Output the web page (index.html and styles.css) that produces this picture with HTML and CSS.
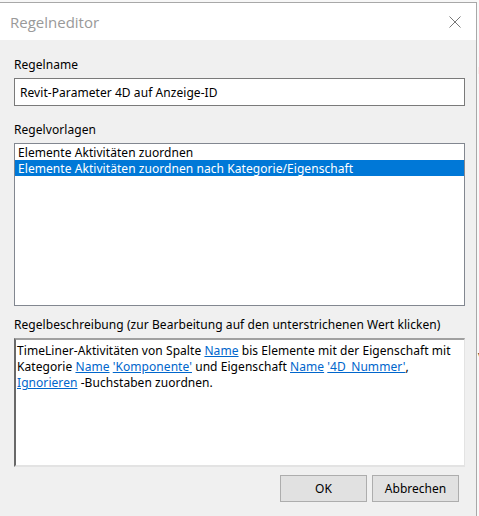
FILE: index.html
```html
<!DOCTYPE html>
<html lang="de">
<head>
  <meta charset="UTF-8" />
  <meta name="viewport" content="width=device-width, initial-scale=1.0"/>
  <title>Regelneditor</title>
  <link rel="stylesheet" href="styles.css">
</head>
<body>
  <div class="screen">
    <div class="dialog">
      <div class="titlebar">
        <span class="title">Regelneditor</span>
        <svg class="close" width="12" height="12" viewBox="0 0 12 12">
          <path d="M0.5 0.5 L11.5 11.5 M11.5 0.5 L0.5 11.5" stroke="#777" stroke-width="1" fill="none"/>
        </svg>
      </div>

      <div class="content">
        <label class="label">Regelname</label>
        <div class="textbox">Revit-Parameter 4D auf Anzeige-ID</div>

        <label class="label">Regelvorlagen</label>
        <div class="listbox">
          <div class="item">Elemente Aktivitäten zuordnen</div>
          <div class="item selected">Elemente Aktivitäten zuordnen nach Kategorie/Eigenschaft</div>
        </div>

        <label class="label">Regelbeschreibung (zur Bearbeitung auf den unterstrichenen Wert klicken)</label>
        <div class="description">
          TimeLiner-Aktivitäten von Spalte <a href="#">Name</a> bis Elemente mit der Eigenschaft mit
          Kategorie <a href="#">Name</a> <a href="#">'Komponente'</a> und Eigenschaft <a href="#">Name</a> <a href="#">'4D_Nummer'</a>,
          <a href="#">Ignorieren</a> -Buchstaben zuordnen.
        </div>

        <div class="buttons">
          <button class="btn">OK</button>
          <button class="btn">Abbrechen</button>
        </div>
      </div>
    </div>

    <div class="behind">
      <span class="peek peek-n">n</span>
      <span class="peek peek-v">v</span>
    </div>
  </div>
</body>
</html>
```

FILE: styles.css
```css
* {
  box-sizing: border-box;
}
body {
  margin: 0;
  background: #f7f7f7;
  font-family: "Noto Sans", "Open Sans", sans-serif;
  font-size: 12px;
  letter-spacing: 0.06px;
  color: #000;
}
.screen {
  display: flex;
  height: 516px;
  overflow: hidden;
}
.dialog {
  width: 477px;
  margin-top: 2px;
  border-top: 1px solid #a8a8a8;
  border-right: 1px solid #a8a8a8;
  background: #f0f0f0;
  display: flex;
  flex-direction: column;
  flex-shrink: 0;
}
.titlebar {
  height: 37px;
  background: #fff;
  display: flex;
  align-items: center;
  justify-content: space-between;
  padding: 0 15px 0 10px;
}
.title {
  font-size: 15px;
  letter-spacing: 0;
  color: #999;
  font-family: "Open Sans", "Noto Sans", sans-serif;
}
.close {
  display: block;
}
.content {
  display: flex;
  flex-direction: column;
  padding: 16px 11px 0 14px;
}
.label {
  line-height: 16px;
  padding-top: 1px;
  margin-bottom: 5px;
}
.textbox {
  height: 28px;
  border: 1px solid #7a7a7a;
  background: #fff;
  padding: 1px 5px 0;
  line-height: 26px;
  margin-bottom: 15px;
}
.listbox {
  height: 163px;
  border: 1px solid #828790;
  background: #fff;
  margin-bottom: 10px;
}
.item {
  height: 16px;
  line-height: 17px;
  padding: 0 3px;
}
.item.selected {
  background: #0078d7;
  color: #fff;
}
.description {
  height: 129px;
  background: #fff;
  border-top: 2px solid #a0a0a0;
  border-left: 2px solid #696969;
  border-right: 1px solid #e3e3e3;
  border-bottom: 2px solid #e3e3e3;
  padding: 3px 1px 1px;
  line-height: 16px;
}
.description a {
  color: #0066cc;
}
.buttons {
  display: flex;
  justify-content: flex-end;
  gap: 5px;
  margin-top: 8px;
  padding-right: 6px;
}
.btn {
  width: 87px;
  height: 27px;
  background: #e1e1e1;
  border: 1px solid #adadad;
  font-family: inherit;
  font-size: 12px;
  color: #000;
  padding: 0;
}
.behind {
  flex: 1;
  position: relative;
  background: #f9f9f9;
}
.peek {
  position: absolute;
  left: 1px;
  font-size: 13px;
}
.peek-n {
  top: 60px;
  color: #0066cc;
}
.peek-v {
  top: 346px;
  color: #333;
}
```
